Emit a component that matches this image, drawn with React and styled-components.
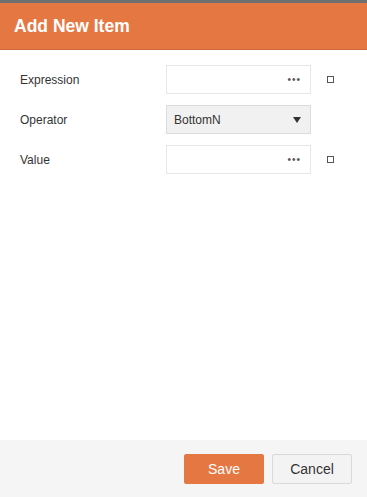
// Dialog for adding a new filter item.
// Header, a small form of three rows and a footer with the actions.

import styled, { createGlobalStyle } from "styled-components";

const GlobalStyle = createGlobalStyle`
  html, body {
    margin: 0;
    padding: 0;
    background: #fff;
  }
  body {
    font-family: "Liberation Sans", Arial, sans-serif;
  }
`;

// Whole dialog frame.
const Dialog = styled.div`
  display: flex;
  flex-direction: column;
  width: 367px;
  height: 497px;
  border-top: 3px solid #6f6f6f;
  box-sizing: border-box;
  background: #fff;
`;

// Orange title bar.
const Header = styled.div`
  display: flex;
  align-items: center;
  height: 46px;
  padding: 0 14px;
  background: #e57743;
  border-bottom: 1px solid #d0693a;
  color: #fff;
  font-size: 17.5px;
  font-weight: 700;
  flex-shrink: 0;
`;

// Form area.
const Body = styled.div`
  flex: 1;
  display: flex;
  flex-direction: column;
  gap: 11px;
  padding: 15px 0 0 20px;
`;

const Row = styled.div`
  display: flex;
  align-items: center;
  height: 29px;
`;

const Label = styled.div`
  width: 146px;
  font-size: 12px;
  color: #333;
`;

// Editor box, white for text editors and grey for the dropdown.
const Editor = styled.div`
  display: flex;
  align-items: center;
  justify-content: space-between;
  box-sizing: border-box;
  width: 145px;
  height: 29px;
  padding: 0 9px 0 7px;
  border: 1px solid ${(p) => (p.$select ? "#dcdcdc" : "#e6e6e6")};
  background: ${(p) => (p.$select ? "#f1f1f1" : "#fff")};
  font-size: 12px;
  color: #333;
`;

const Dots = styled.span`
  margin-left: auto;
  font-size: 10px;
  letter-spacing: 1px;
  color: #555;
`;

const Arrow = styled.span`
  width: 0;
  height: 0;
  border-left: 4px solid transparent;
  border-right: 4px solid transparent;
  border-top: 6px solid #333;
`;

const Check = styled.span`
  width: 7px;
  height: 7px;
  margin-left: 16px;
  border: 1px solid #555;
  box-sizing: border-box;
`;

// Bottom action bar.
const Footer = styled.div`
  display: flex;
  align-items: center;
  justify-content: flex-end;
  gap: 8px;
  height: 57px;
  padding: 0 15px 0 0;
  background: #f5f5f5;
  flex-shrink: 0;
`;

const Button = styled.button`
  width: 80px;
  height: 30px;
  border-radius: 2px;
  font-family: inherit;
  font-size: 14px;
  cursor: pointer;
  border: 1px solid ${(p) => (p.$primary ? "#e57743" : "#d9d9d9")};
  background: ${(p) => (p.$primary ? "#e57743" : "#f3f3f3")};
  color: ${(p) => (p.$primary ? "#fff" : "#333")};
`;

const App = () => {
  return (
    <>
      <GlobalStyle />
      <Dialog>
        <Header>Add New Item</Header>
        <Body>
          <Row>
            <Label>Expression</Label>
            <Editor>
              <Dots>•••</Dots>
            </Editor>
            <Check />
          </Row>
          <Row>
            <Label>Operator</Label>
            <Editor $select>
              BottomN
              <Arrow />
            </Editor>
          </Row>
          <Row>
            <Label>Value</Label>
            <Editor>
              <Dots>•••</Dots>
            </Editor>
            <Check />
          </Row>
        </Body>
        <Footer>
          <Button $primary>Save</Button>
          <Button>Cancel</Button>
        </Footer>
      </Dialog>
    </>
  );
};

export default App;
